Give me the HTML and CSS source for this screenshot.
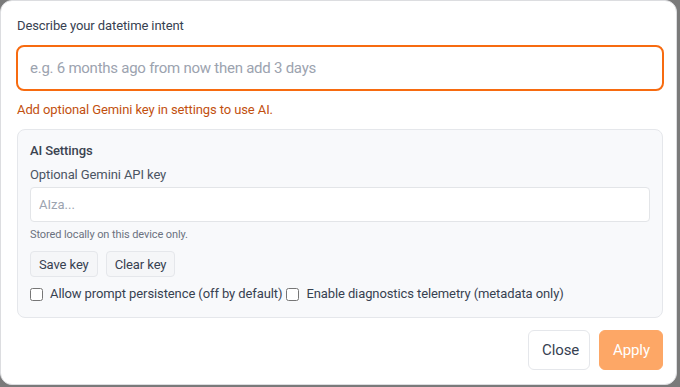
FILE: index.html
```html
<!DOCTYPE html>
<html>
<head>
    <title>Datetime intent</title>
    <link rel="stylesheet" href="styles.css">
</head>
<body>
    <div class="dialog">
        <label class="intent-label" for="intent">Describe your datetime intent</label>
        <input type="text" id="intent" class="intent-input" placeholder="e.g. 6 months ago from now then add 3 days">
        <div class="hint">Add optional Gemini key in settings to use AI.</div>

        <div class="settings">
            <div class="settings-title">AI Settings</div>
            <label class="key-label" for="apiKey">Optional Gemini API key</label>
            <input type="text" id="apiKey" class="key-input" placeholder="AIza...">
            <div class="note">Stored locally on this device only.</div>
            <div class="key-actions">
                <button class="small-btn">Save key</button>
                <button class="small-btn">Clear key</button>
            </div>
            <div class="checks">
                <label class="check"><input type="checkbox"> Allow prompt persistence (off by default)</label>
                <label class="check"><input type="checkbox"> Enable diagnostics telemetry (metadata only)</label>
            </div>
        </div>

        <div class="footer">
            <button class="btn btn-close">Close</button>
            <button class="btn btn-apply">Apply</button>
        </div>
    </div>
</body>
</html>
```

FILE: styles.css
```css
body {
    margin: 0;
    background: #7a7a7a;
    font-family: Roboto, "Noto Sans", sans-serif;
    letter-spacing: -0.1px;
    color: #374151;
}
.dialog {
    box-sizing: border-box;
    width: 677px;
    height: 385px;
    background: #fff;
    border: 1px solid #dcdde0;
    border-radius: 12px;
    padding: 16px 12px 0 15px;
    display: flex;
    flex-direction: column;
}
.intent-label {
    font-size: 13px;
    line-height: 18px;
    color: #374151;
    margin: 0 0 10px 1px;
}
.intent-input {
    box-sizing: border-box;
    width: 648px;
    height: 46px;
    border: 2px solid #f76b10;
    border-radius: 8px;
    padding: 0 12px;
    font-family: inherit;
    font-size: 15px;
    letter-spacing: -0.25px;
    outline: none;
}
.intent-input::placeholder,
.key-input::placeholder {
    color: #9ca3af;
}
.hint {
    font-size: 13px;
    line-height: 18px;
    color: #c2500f;
    margin: 10px 0 0 1px;
}
.settings {
    box-sizing: border-box;
    width: 646px;
    margin: 10px 0 0 1px;
    padding: 12px 12px 14px 12px;
    background: #f8f9fb;
    border: 1px solid #e5e7eb;
    border-radius: 8px;
    display: flex;
    flex-direction: column;
}
.settings-title {
    font-size: 13px;
    font-weight: 500;
    line-height: 18px;
    color: #3b4350;
    margin-bottom: 6px;
}
.key-label {
    font-size: 13px;
    line-height: 18px;
    color: #4b5563;
    margin-bottom: 3px;
}
.key-input {
    box-sizing: border-box;
    width: 620px;
    height: 35px;
    border: 1px solid #e3e5e8;
    border-radius: 4px;
    padding: 0 8px;
    font-family: inherit;
    font-size: 13px;
    background: #fff;
    outline: none;
}
.note {
    font-size: 11px;
    line-height: 14px;
    color: #6b7280;
    margin-top: 6px;
}
.key-actions {
    display: flex;
    gap: 8px;
    margin-top: 9px;
}
.small-btn {
    height: 26px;
    padding: 0 8px;
    font-family: inherit;
    font-size: 13px;
    letter-spacing: inherit;
    color: #374151;
    background: #f5f6f8;
    border: 1px solid #e5e7eb;
    border-radius: 4px;
}
.checks {
    display: flex;
    gap: 4px;
    margin-top: 8px;
}
.check {
    display: flex;
    align-items: center;
    gap: 7px;
    font-size: 13px;
    line-height: 18px;
    color: #374151;
}
.check input {
    margin: 0;
    width: 13px;
    height: 13px;
}
.footer {
    display: flex;
    justify-content: flex-end;
    gap: 9px;
    margin-top: 12px;
    padding-right: 1px;
}
.btn {
    height: 40px;
    padding: 0 13px;
    font-family: inherit;
    font-size: 15px;
    letter-spacing: inherit;
    border-radius: 6px;
}
.btn-close {
    background: #fff;
    color: #374151;
    border: 1px solid #e5e7eb;
    width: 62px;
}
.btn-apply {
    background: #fda766;
    color: #fff;
    border: 1px solid #fda766;
    width: 64px;
}
```
